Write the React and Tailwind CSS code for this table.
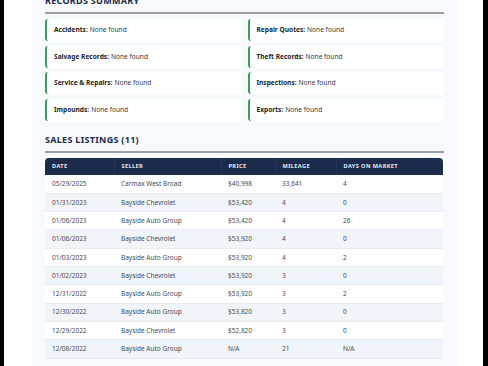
import React from 'react';

const records = [
  ['Accidents', 'Repair Quotes'],
  ['Salvage Records', 'Theft Records'],
  ['Service & Repairs', 'Inspections'],
  ['Impounds', 'Exports'],
];

const listings = [
  ['05/29/2025', 'Carmax West Broad', '$40,998', '33,641', '4'],
  ['01/31/2023', 'Bayside Chevrolet', '$53,420', '4', '0'],
  ['01/06/2023', 'Bayside Auto Group', '$53,420', '4', '26'],
  ['01/06/2023', 'Bayside Chevrolet', '$53,920', '4', '0'],
  ['01/03/2023', 'Bayside Auto Group', '$53,920', '4', '2'],
  ['01/02/2023', 'Bayside Chevrolet', '$53,920', '3', '0'],
  ['12/31/2022', 'Bayside Auto Group', '$53,920', '3', '2'],
  ['12/30/2022', 'Bayside Auto Group', '$53,820', '3', '0'],
  ['12/29/2022', 'Bayside Chevrolet', '$52,820', '3', '0'],
  ['12/08/2022', 'Bayside Auto Group', 'N/A', '21', 'N/A'],
];

const cols = [
  { label: 'Date', w: 'w-[69px]' },
  { label: 'Seller', w: 'w-[107px]' },
  { label: 'Price', w: 'w-[54px]' },
  { label: 'Mileage', w: 'w-[61px]' },
  { label: 'Days on Market', w: 'w-[107px]' },
];

const RecordItem = ({ label }) => (
  <div className="h-[22px] flex items-center bg-white border-l-2 border-[#3e9b60] rounded-[3px] pl-[7px] text-[6.6px] text-[#333a45]">
    <span className="font-bold text-[#1a1f2b]">{label}:</span>
    <span className="ml-[2px]">None found</span>
  </div>
);

const SectionTitle = ({ children }) => (
  <h2 className="text-[9px] leading-[14px] font-bold tracking-[0.3px] uppercase text-[#1c2b4b] pb-[4px] border-b-2 border-[#9a9ea6]">
    {children}
  </h2>
);

export default function App() {
  return (
    <div className="w-[488px] h-[366px] overflow-hidden bg-black" style={{ fontFamily: '"Noto Sans", "Open Sans", sans-serif' }}>
      <div className="ml-[4px] w-[479px] h-full bg-white overflow-hidden">
        <div className="ml-[28px] w-[425px] h-[400px] bg-[#f8f9fc] px-[13px] -mt-[6px]">
          <SectionTitle>Records Summary</SectionTitle>
          <div className="grid grid-cols-2 gap-x-[6px] gap-y-[4.7px] mt-[5px]">
            {records.map(([a, b]) => (
              <React.Fragment key={a}>
                <RecordItem label={a} />
                <RecordItem label={b} />
              </React.Fragment>
            ))}
          </div>

          <div className="mt-[12px]">
            <SectionTitle>Sales Listings (11)</SectionTitle>
          </div>

          <table className="mt-[5px] w-[398px] table-fixed border-collapse">
            <thead>
              <tr className="h-[17px] bg-[#1c2b4b]">
                {cols.map((c, i) => (
                  <th
                    key={c.label}
                    className={`${c.w} pl-[7px] text-left text-[5.6px] font-bold uppercase tracking-[0.4px] text-[#e6eaf2] ${i === 0 ? 'rounded-tl-[4px]' : ''} ${i === cols.length - 1 ? 'rounded-tr-[4px]' : 'border-r border-[#26365a]'}`}
                  >
                    {c.label}
                  </th>
                ))}
              </tr>
            </thead>
            <tbody>
              {listings.map((row, r) => (
                <tr key={r} className={`h-[18.3px] border-b border-[#e9ecf2] ${r % 2 === 1 ? 'bg-[#f1f4f9]' : 'bg-white'}`}>
                  {row.map((cell, i) => (
                    <td key={i} className="pl-[7px] text-[6.5px] text-[#454b55]">
                      {cell}
                    </td>
                  ))}
                </tr>
              ))}
            </tbody>
          </table>
        </div>
      </div>
    </div>
  );
}
